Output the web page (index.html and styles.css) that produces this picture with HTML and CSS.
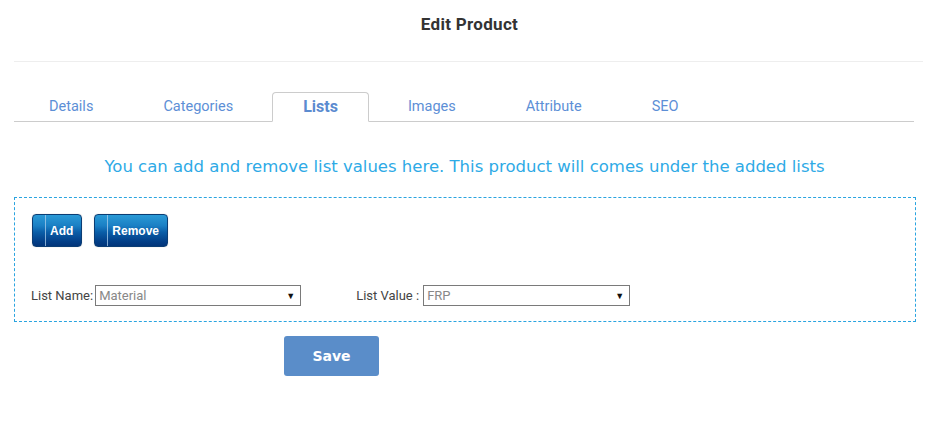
FILE: index.html
```html
<!DOCTYPE html>
<html>
<head>
<meta charset="utf-8">
<title>Edit Product</title>
<link rel="stylesheet" href="styles.css">
</head>
<body>
<div class="header"><h1 class="title">Edit Product</h1></div>
<ul class="tabs">
  <li class="tab"><a class="tab-link">Details</a></li>
  <li class="tab"><a class="tab-link">Categories</a></li>
  <li class="tab"><a class="tab-link active">Lists</a></li>
  <li class="tab"><a class="tab-link">Images</a></li>
  <li class="tab"><a class="tab-link">Attribute</a></li>
  <li class="tab"><a class="tab-link">SEO</a></li>
</ul>
<p class="info">You can add and remove list values here. This product will comes under the added lists</p>
<div class="panel">
  <div class="btn-row">
    <button class="btn">Add</button>
    <button class="btn">Remove</button>
  </div>
  <div class="field-row">
    <div class="field">
      <span class="label">List Name:</span>
      <div class="select"><span>Material</span><span class="arrow">&#9660;</span></div>
    </div>
    <div class="field field-2">
      <span class="label">List Value :</span>
      <div class="select select-2"><span>FRP</span><span class="arrow">&#9660;</span></div>
    </div>
  </div>
</div>
<button class="save">Save</button>
</body>
</html>
```
FILE: styles.css
```css
* { box-sizing: border-box; }
body {
  margin: 0;
  background: #fff;
  font-family: Roboto, "Liberation Sans", sans-serif;
  color: #333;
}
.header {
  margin: 0 15px 0 14px;
  height: 62px;
  border-bottom: 1px solid #eeeeee;
  padding-top: 14px;
}
.title {
  margin: 0;
  text-align: center;
  font-size: 17px;
  letter-spacing: 0.3px;
  line-height: 20px;
  font-weight: bold;
  color: #333;
  padding-left: 2px;
}
.tabs {
  list-style: none;
  margin: 30px 0 0 14px;
  padding: 0;
  width: 900px;
  display: flex;
  border-bottom: 1px solid #cccccc;
}
.tab {
  padding: 0 4px;
  margin-bottom: -1px;
}
.tab-link {
  display: block;
  height: 30px;
  line-height: 27px;
  padding: 0 30px;
  border: 1px solid transparent;
  border-radius: 4px 4px 0 0;
  font-size: 14.5px;
  color: #5d8fd6;
  cursor: pointer;
}
.tab-link.active {
  border-color: #cccccc;
  border-bottom-color: #fff;
  background: #fff;
  font-size: 16px;
  font-weight: bold;
  color: #5b8bd0;
}
.info {
  margin: 35px 0 20px 0;
  text-align: center;
  font-family: "DejaVu Sans", Verdana, sans-serif;
  font-size: 16.5px;
  line-height: 20px;
  color: #2eaae6;
  padding-right: 9px;
}
.panel {
  margin-left: 14px;
  width: 902px;
  border: 1px dashed #2aa4e0;
  padding: 16px 16px 15px 16px;
}
.btn-row {
  display: flex;
  gap: 12px;
  margin-left: 1px;
}
.btn {
  height: 33px;
  padding: 0 8px 0 17px;
  border: 1px solid #0b3d74;
  border-radius: 4px;
  color: #fff;
  font-family: "Liberation Sans", Arial, sans-serif;
  font-size: 12px;
  font-weight: bold;
  background:
    linear-gradient(to right, transparent 12px, rgba(170,205,235,0.75) 12px, rgba(170,205,235,0.75) 13px, transparent 13px),
    linear-gradient(to bottom, #2a9ad6 0%, #1a7fc4 35%, #0a5ea8 55%, #033f88 85%, #02357a 100%);
  box-shadow: 0 0 1px rgba(0,0,0,0.3);
}
.field-row {
  display: flex;
  margin-top: 38px;
  align-items: center;
}
.field {
  display: flex;
  align-items: center;
}
.field-2 {
  margin-left: 55px;
}
.label {
  font-size: 13px;
  color: #444;
  margin-right: 2px;
}
.select {
  width: 206px;
  height: 21px;
  border: 1px solid #7a7a7a;
  display: flex;
  justify-content: space-between;
  align-items: center;
  padding: 0 5px 0 3px;
  font-size: 13px;
  color: #888;
  background: #fff;
}
.select-2 {
  width: 207px;
  margin-left: 2px;
}
.arrow {
  font-size: 9px;
  color: #111;
}
.save {
  margin: 14px 0 0 284px;
  width: 95px;
  height: 40px;
  border: none;
  border-radius: 3px;
  background: #5a8dc9;
  color: #fff;
  font-family: "DejaVu Sans", Verdana, sans-serif;
  font-size: 14px;
  font-weight: bold;
}
```
